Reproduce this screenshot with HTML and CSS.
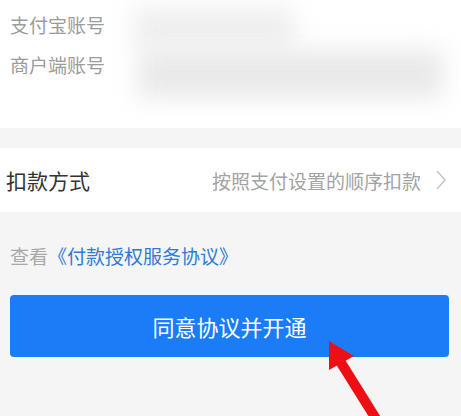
FILE: index.html
```html
<!DOCTYPE html>
<html lang="zh-CN">
<head>
  <meta charset="UTF-8">
  <meta name="viewport" content="width=device-width, initial-scale=1.0">
  <title>开通授权</title>
  <link rel="stylesheet" href="styles.css">
</head>
<body>
  <div class="page">
    <div class="account-card">
      <div class="labels">
        <div class="label">支付宝账号</div>
        <div class="label">商户端账号</div>
      </div>
      <div class="masked">
        <div class="blur blur-top"></div>
        <div class="blur blur-bottom"></div>
      </div>
    </div>

    <div class="row">
      <span class="row-title">扣款方式</span>
      <span class="row-value">按照支付设置的顺序扣款</span>
      <svg class="chevron" width="12" height="22" viewBox="0 0 12 22">
        <path d="M2 2 L10 11 L2 20" fill="none" stroke="#c8c8c8" stroke-width="1.6"/>
      </svg>
    </div>

    <div class="agreement">查看<a href="#">《付款授权服务协议》</a></div>

    <button class="submit">同意协议并开通</button>

    <svg class="arrow" width="461" height="416" viewBox="0 0 461 416">
      <path d="M338 358 L378 422" stroke="#ee0f14" stroke-width="10" stroke-linecap="round"/>
      <polygon points="329,341 329,370 354,356" fill="#ee0f14"/>
    </svg>
  </div>
</body>
</html>
```

FILE: styles.css
```css
body {
  margin: 0;
  font-family: "Noto Sans CJK SC", "Noto Sans", sans-serif;
  background-color: #f5f5f5;
}
.page {
  position: relative;
  width: 461px;
  height: 416px;
  overflow: hidden;
}
.account-card {
  display: flex;
  height: 128px;
  background-color: #fff;
}
.labels {
  display: flex;
  flex-direction: column;
  gap: 16px;
  padding: 13px 0 0 10px;
  width: 118px;
}
.label {
  font-size: 19px;
  line-height: 24px;
  color: #9b9b9b;
}
.masked {
  position: relative;
  flex: 1;
}
.blur {
  position: absolute;
  background-color: #e9e9e9;
  filter: blur(12px);
}
.blur-top {
  left: 6px;
  top: 8px;
  width: 160px;
  height: 40px;
  background-color: #eeeeee;
}
.blur-bottom {
  left: 10px;
  top: 50px;
  width: 305px;
  height: 48px;
}
.row {
  display: flex;
  align-items: center;
  height: 64px;
  margin-top: 20px;
  padding: 0 14px 0 6px;
  background-color: #fff;
}
.row-title {
  flex: 1;
  font-size: 21px;
  color: #333;
}
.row-value {
  font-size: 19px;
  color: #a3a3a3;
  margin-right: 14px;
}
.agreement {
  padding: 31px 0 0 10px;
  font-size: 19px;
  line-height: 26px;
  color: #a8a8a8;
}
.agreement a {
  color: #2f7ad4;
  text-decoration: none;
}
.submit {
  display: block;
  width: 439px;
  height: 62px;
  margin: 26px 0 0 10px;
  border: none;
  border-radius: 4px;
  background-color: #1a7cf7;
  color: #fff;
  font-family: inherit;
  font-size: 22px;
}
.arrow {
  position: absolute;
  left: 0;
  top: 0;
  pointer-events: none;
}
```
